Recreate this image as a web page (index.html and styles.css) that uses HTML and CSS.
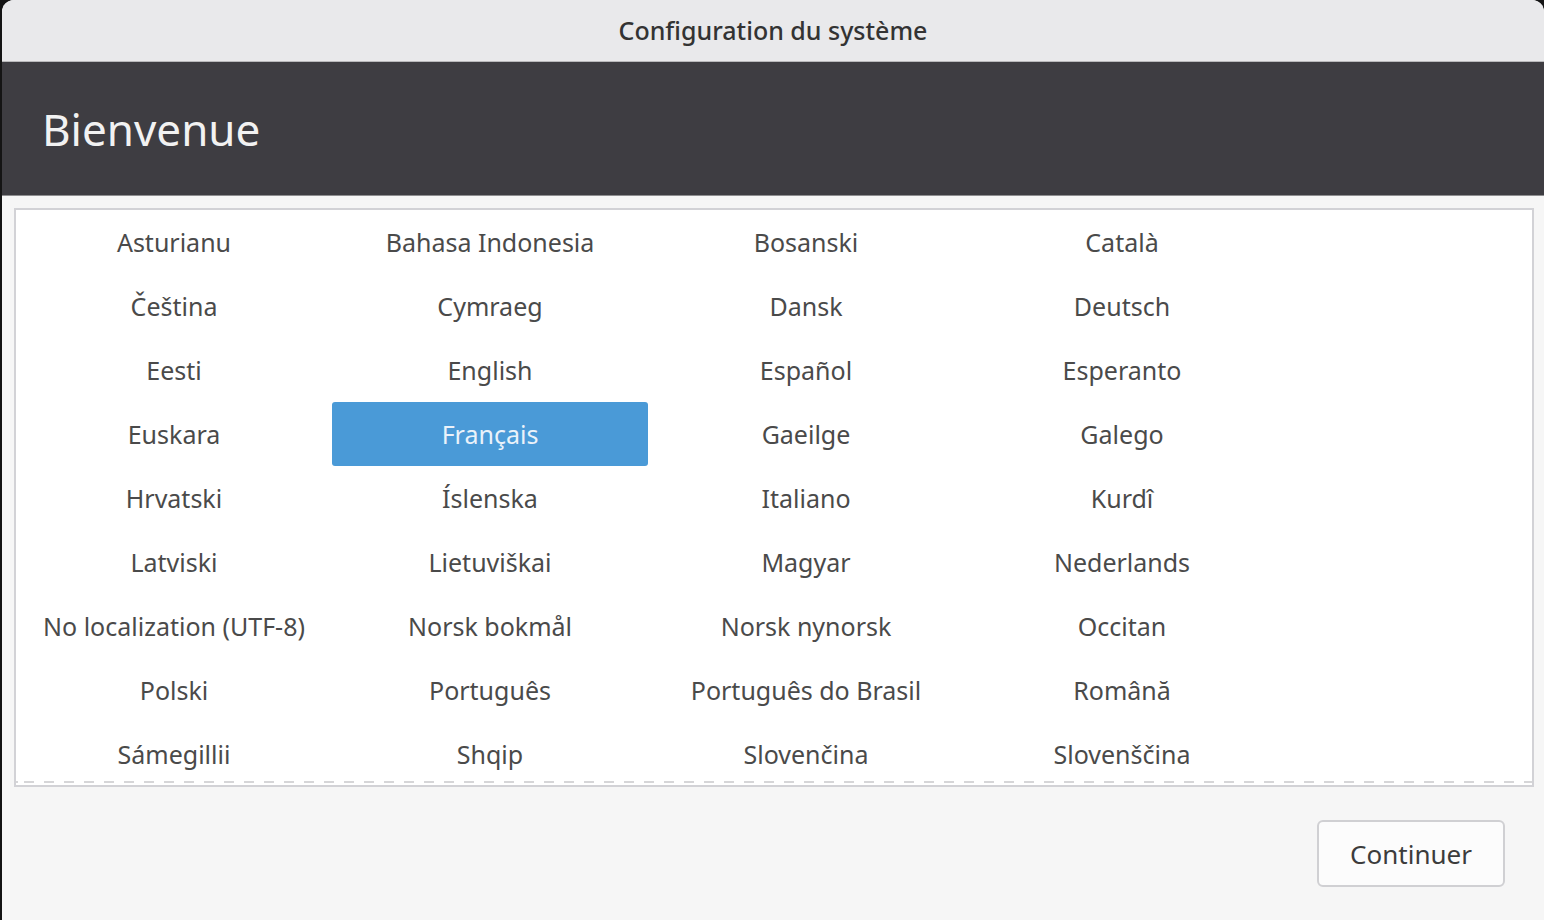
FILE: index.html
```html
<!DOCTYPE html>
<html lang="fr">
<head>
  <meta charset="UTF-8" />
  <meta name="viewport" content="width=device-width, initial-scale=1.0" />
  <title>Configuration du système</title>
  <link rel="stylesheet" href="styles.css">
</head>
<body>
  <div class="window">
    <div class="titlebar">Configuration du système</div>
    <div class="banner">
      <h1>Bienvenue</h1>
    </div>
    <div class="content">
      <div class="frame">
        <div class="lang-grid">
          <div class="lang">Asturianu</div>
          <div class="lang">Bahasa Indonesia</div>
          <div class="lang">Bosanski</div>
          <div class="lang">Català</div>
          <div class="lang">Čeština</div>
          <div class="lang">Cymraeg</div>
          <div class="lang">Dansk</div>
          <div class="lang">Deutsch</div>
          <div class="lang">Eesti</div>
          <div class="lang">English</div>
          <div class="lang">Español</div>
          <div class="lang">Esperanto</div>
          <div class="lang">Euskara</div>
          <div class="lang selected">Français</div>
          <div class="lang">Gaeilge</div>
          <div class="lang">Galego</div>
          <div class="lang">Hrvatski</div>
          <div class="lang">Íslenska</div>
          <div class="lang">Italiano</div>
          <div class="lang">Kurdî</div>
          <div class="lang">Latviski</div>
          <div class="lang">Lietuviškai</div>
          <div class="lang">Magyar</div>
          <div class="lang">Nederlands</div>
          <div class="lang">No localization (UTF-8)</div>
          <div class="lang">Norsk bokmål</div>
          <div class="lang">Norsk nynorsk</div>
          <div class="lang">Occitan</div>
          <div class="lang">Polski</div>
          <div class="lang">Português</div>
          <div class="lang">Português do Brasil</div>
          <div class="lang">Română</div>
          <div class="lang">Sámegillii</div>
          <div class="lang">Shqip</div>
          <div class="lang">Slovenčina</div>
          <div class="lang">Slovenščina</div>
        </div>
      </div>
      <div class="actions">
        <button class="btn">Continuer</button>
      </div>
    </div>
  </div>
</body>
</html>
```

FILE: styles.css
```css
html, body {
  height: 100%;
}

body {
  margin: 0;
  background: #141414;
  font-family: 'Noto Sans', 'DejaVu Sans', sans-serif;
  color: #4a4a4a;
  overflow: hidden;
}

.window {
  margin-left: 2px;
  height: 100%;
  background: #f6f6f6;
  border-radius: 12px 12px 0 0;
  overflow: hidden;
  display: flex;
  flex-direction: column;
}

.titlebar {
  height: 61px;
  line-height: 61px;
  flex-shrink: 0;
  background: #e9e9eb;
  border-bottom: 1px solid #b9b9bb;
  text-align: center;
  font-size: 25px;
  font-weight: 500;
  color: #333333;
}

.banner {
  height: 133px;
  flex-shrink: 0;
  background: #3e3d42;
  border-bottom: 1px solid #8e8e90;
  display: flex;
  align-items: center;
  padding-left: 40px;
}

.banner h1 {
  margin: 0;
  font-size: 44px;
  font-weight: 400;
  color: #f2f2f2;
}

.content {
  flex: 1;
  padding: 12px 10px 0 12px;
  display: flex;
  flex-direction: column;
}

.frame {
  height: 575px;
  border: 2px solid #d2d2d6;
  background: #ffffff;
  position: relative;
  overflow: hidden;
}

/* scroll edge marker at the bottom of the list */
.frame::after {
  content: '';
  position: absolute;
  left: 0;
  right: 0;
  bottom: 2px;
  height: 2px;
  background: repeating-linear-gradient(90deg, #d6d6d8 0 10px, transparent 10px 20px);
  background-position: 8px 0;
}

.lang-grid {
  display: grid;
  grid-template-columns: repeat(4, 316px);
  grid-auto-rows: 64px;
}

.lang {
  display: flex;
  align-items: center;
  justify-content: center;
  font-size: 25px;
  white-space: nowrap;
}

.lang.selected {
  background: #4a9ad7;
  color: #eaf2fa;
  border-radius: 3px;
}

.actions {
  display: flex;
  justify-content: flex-end;
  padding: 33px 29px 0 0;
}

.btn {
  width: 188px;
  height: 67px;
  font-family: inherit;
  font-size: 26px;
  color: #3c3c3c;
  background: #fcfcfc;
  border: 2px solid #d0d0d3;
  border-radius: 6px;
  cursor: pointer;
}
```
